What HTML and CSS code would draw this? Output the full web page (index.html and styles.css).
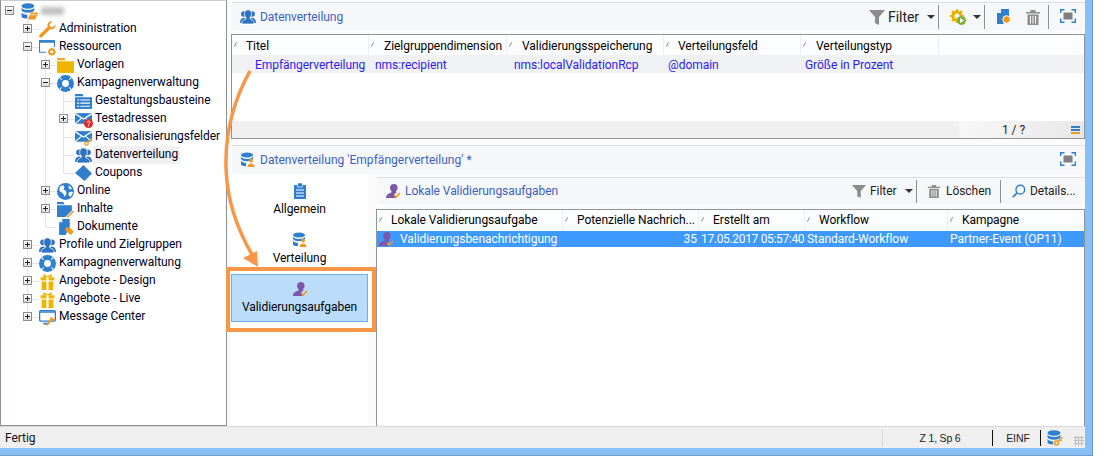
FILE: index.html
```html
<!DOCTYPE html>
<html lang="de">
<head>
<meta charset="utf-8">
<title>Datenverteilung</title>
<link rel="stylesheet" href="styles.css">
</head>
<body>
<svg class="defs" width="0" height="0" aria-hidden="true">
  <defs>
    <symbol id="i-root" viewBox="0 0 16 16"><ellipse cx="6.500" cy="2.800" rx="6" ry="2.600" fill="#2f7fcf"/><path d="M.5 4.500c1 1.500 3.400 2.100 6 2.100s5-.6 6-2.100V7c-1 1.500-3.400 2.100-6 2.100S1.500 8.500.5 7z" fill="#2f7fcf"/><path d="M.5 9c1 1.500 3.400 2.100 5.500 2.100v3.500c-3 0-5.500-.8-5.500-2.200z" fill="#2f7fcf"/><path d="M9 9h7l-2.500 6.500H6.500z" fill="#ee9a22"/><path d="M9 11h5" stroke="#fff" stroke-width=".8"/></symbol>
    <symbol id="i-wrench" viewBox="0 0 16 16"><path d="M15.500 3.200l-2.700 2.600-2.300-.5-.5-2.300L12.700.3C10.700-.2 8.300 1 8 3.500c-.1.800 0 1.400.2 2L.8 12.800c-.9 1-.8 1.900-.2 2.500.7.600 1.600.6 2.400-.2l7.400-7.400c.7.200 1.400.3 2.100.1 2.300-.5 3.400-2.600 3-4.600z" fill="#ee9a22"/></symbol>
    <symbol id="i-window" viewBox="0 0 16 16"><path d="M14.500 1.500v6" fill="none" stroke="#2f7fcf"/><path d="M.5 1.500v11h6" fill="none" stroke="#2f7fcf"/><rect y="1" width="15" height="2.500" fill="#2f7fcf"/><circle cx="12" cy="12" r="2.400" fill="none" stroke="#ee9a22" stroke-width="1.800"/><path d="M12 8.500v1M12 14.500v1M8.500 12h1M14.500 12h1M9.500 9.500l.7.7M13.800 13.800l.7.7M9.500 14.500l.7-.7M13.800 10.200l.7-.7" stroke="#ee9a22" stroke-width="1.300"/></symbol>
    <symbol id="i-folder" viewBox="0 0 16 16"><path d="M0 1h7l1 2H0z" fill="#eea91a"/><rect y="4" width="16" height="11" fill="#eeb500"/></symbol>
    <symbol id="i-ring" viewBox="0 0 16 16"><circle cx="8" cy="8" r="5.600" fill="none" stroke="#2f7fcf" stroke-width="4.800"/><path d="M8 0v3M8 13v3M0 8h3M13 8h3" stroke="#fff" stroke-width="1" transform="rotate(45 8 8)"/></symbol>
    <symbol id="i-list" viewBox="0 0 16 16"><path d="M0 1h7l1 2H0z" fill="#2f7fcf"/><rect y="4" width="16" height="11" fill="#2f7fcf"/><path d="M2 6.500h2M5 6.500h9M2 9.500h2M5 9.500h9M2 12.500h2M5 12.500h9" stroke="#fff"/></symbol>
    <symbol id="i-mail" viewBox="0 0 16 16"><rect y="2" width="16" height="10" fill="#2f7fcf"/><path d="M0 2.500l8 5 8-5" fill="none" stroke="#fff" stroke-width="1.300"/><path d="M0 12l6-5M16 12l-6-5" stroke="#fff"/></symbol>
    <symbol id="i-people" viewBox="0 0 16 16"><circle cx="3.800" cy="5" r="2.700" fill="#2f73c0"/><path d="M0 14c0-3 1.200-5 3.800-5s3.800 2 3.800 5z" fill="#2f73c0"/><circle cx="12.200" cy="5" r="2.700" fill="#2f73c0"/><path d="M8.400 14c0-3 1.200-5 3.800-5s3.800 2 3.800 5z" fill="#2f73c0"/><path d="M8 .8c2.300 0 3.600 1.700 3.600 4 0 1.700-.7 3-1.600 3.700v1.300l3 1.700c.8.500 1 1.600 1 3.500H2c0-1.900.2-3 1-3.500l3-1.700V8.500C5.100 7.800 4.400 6.500 4.400 4.800c0-2.300 1.300-4 3.600-4z" fill="#2f73c0" stroke="#fff" stroke-width=".7"/></symbol>
    <symbol id="i-diamond" viewBox="0 0 16 16"><path d="M8 0l8 8-7 7-9-7.500z" fill="#2f7fcf"/></symbol>
    <symbol id="i-globe" viewBox="0 0 16 16"><circle cx="8" cy="8" r="8" fill="#2f7fcf"/><path d="M3 3l3-1 1 2-1 2 2 1 1 3-2 3-1-3-3-2-1-2zM11 2l3 3-1 1-2-1zM11 9l3-1 1 1-2 4-2-1z" fill="#fff"/></symbol>
    <symbol id="i-fpen" viewBox="0 0 16 16"><path d="M0 1h6l1 2H0z" fill="#2f7fcf"/><path d="M0 4h14v5l-6 6H0z" fill="#2f7fcf"/><path d="M9 15l6-6 1 1-6 6z" fill="#ee9a22"/></symbol>
    <symbol id="i-doc" viewBox="0 0 16 16"><path d="M5 0h7v8l-4 7H2V3z" fill="#2f7fcf"/><path d="M5 0v3H2z" fill="#fff"/><path d="M8 8h4l4 4-3 3-5-4z" fill="#ee9a22"/></symbol>
    <symbol id="i-gift" viewBox="0 0 16 16"><path d="M4 1l4 2 4-2v3H4z" fill="#eeb500"/><rect x="1.500" y="4" width="13" height="3" fill="#eeb500"/><path d="M2.500 8h11v8h-11z" fill="#eeb500"/><path d="M7 4h2v12H7z" fill="#fff"/></symbol>
    <symbol id="i-monitor" viewBox="0 0 16 16"><rect x=".6" y="1.600" width="14.800" height="9.800" rx="1" fill="#fff" stroke="#2f7fcf" stroke-width="1.200"/><path d="M1 2h14v1.500H1zM4 13h5v1.500H4z" fill="#2f7fcf"/><path d="M15 8l-1.500 1.500-1-.5.300-1.300C11 7.300 9.800 8.800 10.400 10.300L7 14c-.8 1 .4 2 1.200 1.200l3.600-3.600c1.800.4 3.300-1.200 3.200-3.600z" fill="#ee9a22"/></symbol>
    <symbol id="i-funnel" viewBox="0 0 16 16"><path d="M0 1h16l-6 7v8l-4-2V8z" fill="#8c8c8c"/></symbol>
    <symbol id="i-gearplay" viewBox="0 0 16 16"><circle cx="7" cy="7" r="4" fill="none" stroke="#e5b000" stroke-width="3"/><path d="M7 0v3M7 11v3M0 7h3M11 7h3M2 2l2 2M10 10l2 2M2 12l2-2M10 4l2-2" stroke="#e5b000" stroke-width="2"/><circle cx="11.500" cy="11.500" r="4.500" fill="#7db33a"/><path d="M10 9l4 2.500-4 2.500z" fill="#fff"/></symbol>
    <symbol id="i-docgear" viewBox="0 0 16 16"><path d="M5 0h8v7l-6 8H1V4z" fill="#2f7fcf"/><path d="M5 0v4H1z" fill="#fff"/><circle cx="10.500" cy="10.500" r="3.800" fill="#ee9a22" stroke="#fff"/></symbol>
    <symbol id="i-trash" viewBox="0 0 16 16"><path d="M1 3h14v1.500H1zM5.500 1h5v2h-5z" fill="#8c8c8c"/><path d="M2.500 5.500h11V16h-11z" fill="#8c8c8c"/><path d="M5.500 7v7.500M8 7v7.500M10.500 7v7.500" stroke="#fff"/></symbol>
    <symbol id="i-expand" viewBox="0 0 16 16"><path d="M.7 4V.7H4.500M11.500.7h3.800V4M.7 9.500v3.800H4.500M11.500 13.300h3.800V9.500" fill="none" stroke="#2f7fcf" stroke-width="1.400"/><rect x="3.500" y="3.500" width="9" height="7" fill="#808080"/></symbol>
    <symbol id="i-dbperson" viewBox="0 0 16 16"><ellipse cx="7" cy="3" rx="6" ry="2.600" fill="#2f7fcf"/><path d="M1 4.800c1 1.600 3.400 2.200 6 2.200s5-.6 6-2.200V7c-1 1.600-3.400 2.200-6 2.200S2 8.600 1 7z" fill="#2f7fcf"/><path d="M1 8.800c1 1.400 3 2 5 2v3.500c-3 0-5-.7-5-2z" fill="#2f7fcf"/><circle cx="11" cy="8.500" r="2" fill="#ee9a22"/><path d="M7.500 15c0-2 1.500-3.500 3.500-3.500s3.500 1.500 3.500 3.500z" fill="#ee9a22"/></symbol>
    <symbol id="i-clip" viewBox="0 0 16 16"><rect x="2" y="2" width="12" height="14" fill="#2f7fcf"/><rect x="5.500" y="0" width="5" height="4" fill="#2f7fcf" stroke="#fff" stroke-width=".6"/><path d="M4 7h8M4 10h8M4 13h8" stroke="#fff"/></symbol>
    <symbol id="i-valid" viewBox="0 0 16 16"><path d="M8 0c2.200 0 3.600 1.600 3.600 3.700 0 1.400-.6 2.500-1.500 3.200v1.600l1 .6H9.500l-1.300 1.400L10 14H0c0-2.500 1-3.600 3-4.500L5.400 8.500V6.900C4.500 6.200 4 5.100 4 3.700 4 1.600 5.800 0 8 0z" fill="#7b57a8" transform="translate(1 1)"/><path d="M9 12l2 2 4-4" fill="none" stroke="#ee9a22" stroke-width="1.600"/></symbol>
    <symbol id="i-search" viewBox="0 0 16 16"><circle cx="9.500" cy="6.500" r="5" fill="none" stroke="#2f7fcf" stroke-width="1.600"/><path d="M5.800 10.200L1 15" stroke="#2f7fcf" stroke-width="2"/></symbol>
    <symbol id="i-dbkey" viewBox="0 0 16 16"><ellipse cx="7" cy="3" rx="6.500" ry="2.800" fill="#2f7fcf"/><path d="M.5 4.800c1 1.600 3.900 2.200 6.500 2.200s5.500-.6 6.500-2.200v2.700c-1 1.600-3.900 2.200-6.500 2.200S1.500 9.100.5 7.500z" fill="#2f7fcf"/><path d="M.5 9.300c1 1.500 3.500 2 5.500 2.100v3.100c-3 0-5.500-.8-5.500-2.200z" fill="#2f7fcf"/><circle cx="9.500" cy="13" r="2" fill="none" stroke="#ee9a22" stroke-width="1.500"/><path d="M11 11.500L15.500 7M13 9.500l1.500 1.500" stroke="#ee9a22" stroke-width="1.500"/></symbol>
    <symbol id="i-q" viewBox="0 0 9 9"><circle cx="4.500" cy="4.500" r="4.500" fill="#e02b27"/><path d="M3 3.300c.2-1.600 3-1.600 3 0 0 1.200-1.500 1-1.500 2.300M4.500 6.500v1" fill="none" stroke="#fff"/></symbol>
    <symbol id="i-key" viewBox="0 0 9 9"><circle cx="2.500" cy="6.500" r="1.700" fill="none" stroke="#ee9a22" stroke-width="1.200"/><path d="M3.700 5.300L8.500.5M6.500 2.500L8 4" stroke="#ee9a22" stroke-width="1.200"/></symbol>
  </defs>
</svg>

<div class="app">
  <div class="main">
    <nav class="tree">
      <div class="node root"><span class="c"><i class="tw minus"></i></span><svg class="ico"><use href="#i-root"/></svg><span class="blurred"></span></div>
      <div class="node"><span class="c t"><i class="tw plus"></i></span><svg class="ico"><use href="#i-wrench"/></svg><span class="lbl">Administration</span></div>
      <div class="node"><span class="c t"><i class="tw minus"></i></span><svg class="ico"><use href="#i-window"/></svg><span class="lbl">Ressourcen</span></div>
      <div class="node"><span class="c v"></span><span class="c t"><i class="tw plus"></i></span><svg class="ico"><use href="#i-folder"/></svg><span class="lbl">Vorlagen</span></div>
      <div class="node"><span class="c v"></span><span class="c t"><i class="tw minus"></i></span><svg class="ico"><use href="#i-ring"/></svg><span class="lbl">Kampagnenverwaltung</span></div>
      <div class="node"><span class="c v"></span><span class="c v"></span><span class="c t"></span><svg class="ico"><use href="#i-list"/></svg><span class="lbl">Gestaltungsbausteine</span></div>
      <div class="node"><span class="c v"></span><span class="c v"></span><span class="c t"><i class="tw plus"></i></span><span class="ico-wrap"><svg class="ico"><use href="#i-mail"/></svg><svg class="badge"><use href="#i-q"/></svg></span><span class="lbl">Testadressen</span></div>
      <div class="node"><span class="c v"></span><span class="c v"></span><span class="c t"></span><span class="ico-wrap"><svg class="ico"><use href="#i-mail"/></svg><svg class="badge"><use href="#i-key"/></svg></span><span class="lbl">Personalisierungsfelder</span></div>
      <div class="node"><span class="c v"></span><span class="c v"></span><span class="c t"></span><svg class="ico"><use href="#i-people"/></svg><span class="lbl current">Datenverteilung</span></div>
      <div class="node"><span class="c v"></span><span class="c v"></span><span class="c l"></span><svg class="ico"><use href="#i-diamond"/></svg><span class="lbl">Coupons</span></div>
      <div class="node"><span class="c v"></span><span class="c t"><i class="tw plus"></i></span><svg class="ico"><use href="#i-globe"/></svg><span class="lbl">Online</span></div>
      <div class="node"><span class="c v"></span><span class="c t"><i class="tw plus"></i></span><svg class="ico"><use href="#i-fpen"/></svg><span class="lbl">Inhalte</span></div>
      <div class="node"><span class="c v"></span><span class="c l"></span><svg class="ico"><use href="#i-doc"/></svg><span class="lbl">Dokumente</span></div>
      <div class="node"><span class="c t"><i class="tw plus"></i></span><svg class="ico"><use href="#i-people"/></svg><span class="lbl">Profile und Zielgruppen</span></div>
      <div class="node"><span class="c t"><i class="tw plus"></i></span><svg class="ico"><use href="#i-ring"/></svg><span class="lbl">Kampagnenverwaltung</span></div>
      <div class="node"><span class="c t"><i class="tw plus"></i></span><svg class="ico"><use href="#i-gift"/></svg><span class="lbl">Angebote - Design</span></div>
      <div class="node"><span class="c t"><i class="tw plus"></i></span><svg class="ico"><use href="#i-gift"/></svg><span class="lbl">Angebote - Live</span></div>
      <div class="node"><span class="c l"><i class="tw plus"></i></span><svg class="ico"><use href="#i-monitor"/></svg><span class="lbl">Message Center</span></div>
    </nav>

    <section class="content">
      <header class="bar bar-top">
        <svg class="ico"><use href="#i-people"/></svg>
        <span class="bar-title">Datenverteilung</span>
        <span class="tools">
          <svg class="ico"><use href="#i-funnel"/></svg>
          <span class="tool-lg">Filter</span>
          <i class="caret caret-filter"></i>
          <i class="sep"></i>
          <svg class="ico ico-gear"><use href="#i-gearplay"/></svg>
          <i class="caret caret-gear"></i>
          <i class="sep"></i>
          <svg class="ico ico-doc"><use href="#i-docgear"/></svg>
          <svg class="ico ico-trash"><use href="#i-trash"/></svg>
          <i class="sep sep-trash"></i>
          <svg class="ico ico-exp"><use href="#i-expand"/></svg>
        </span>
      </header>

      <div class="grid grid-top">
        <div class="row head cols-top">
          <div class="hc"><i class="sort"></i>Titel</div>
          <div class="hc"><i class="sort"></i>Zielgruppendimension</div>
          <div class="hc"><i class="sort"></i>Validierungsspeicherung</div>
          <div class="hc"><i class="sort"></i>Verteilungsfeld</div>
          <div class="hc"><i class="sort"></i>Verteilungstyp</div>
          <div class="hc"></div>
        </div>
        <div class="row data cols-top">
          <div class="dc">Empfängerverteilung</div>
          <div class="dc">nms:recipient</div>
          <div class="dc">nms:localValidationRcp</div>
          <div class="dc">@domain</div>
          <div class="dc">Größe in Prozent</div>
          <div class="dc"></div>
        </div>
        <div class="grid-foot">
          <span class="pager">1 / ?</span>
          <i class="menu-lines"></i>
        </div>
      </div>

      <header class="bar bar-detail">
        <svg class="ico"><use href="#i-dbperson"/></svg>
        <span class="bar-title title-wide">Datenverteilung 'Empfängerverteilung' *</span>
        <span class="tools">
          <svg class="ico ico-exp"><use href="#i-expand"/></svg>
        </span>
      </header>

      <div class="detail">
        <div class="sidenav">
          <div class="navitem"><svg class="ico"><use href="#i-clip"/></svg><span>Allgemein</span></div>
          <div class="navitem"><svg class="ico"><use href="#i-dbperson"/></svg><span>Verteilung</span></div>
          <div class="navitem active"><svg class="ico"><use href="#i-valid"/></svg><span>Validierungsaufgaben</span></div>
        </div>
        <div class="pane">
          <header class="bar bar-sub">
            <svg class="ico"><use href="#i-valid"/></svg>
            <span class="bar-title">Lokale Validierungsaufgaben</span>
            <span class="tools tools-sub">
              <svg class="ico ico-sm"><use href="#i-funnel"/></svg>
              <span class="tool-txt txt-filter">Filter</span>
              <i class="caret caret-sub"></i>
              <i class="sep"></i>
              <svg class="ico ico-sm ico-del"><use href="#i-trash"/></svg>
              <span class="tool-txt txt-del">Löschen</span>
              <i class="sep sep-del"></i>
              <svg class="ico ico-sm ico-find"><use href="#i-search"/></svg>
              <span class="tool-txt txt-details">Details...</span>
            </span>
          </header>
          <div class="grid grid-sub">
            <div class="row head head-sub cols-sub">
              <div class="hc"><i class="sort"></i>Lokale Validierungsaufgabe</div>
              <div class="hc"><i class="sort"></i>Potenzielle Nachrich...</div>
              <div class="hc"><i class="sort"></i>Erstellt am</div>
              <div class="hc"><i class="sort"></i>Workflow</div>
              <div class="hc"><i class="sort"></i>Kampagne</div>
            </div>
            <div class="row data selected cols-sub">
              <div class="dc dc-icon"><svg class="ico"><use href="#i-valid"/></svg>Validierungsbenachrichtigung</div>
              <div class="dc dc-num">35</div>
              <div class="dc dc-date">17.05.2017 05:57:40</div>
              <div class="dc dc-tight">Standard-Workflow</div>
              <div class="dc dc-tight">Partner-Event (OP11)</div>
            </div>
          </div>
        </div>
      </div>
    </section>
  </div>

  <footer class="status">
    <span class="st-msg">Fertig</span>
    <span class="st-pos">Z 1, Sp 6</span>
    <span class="st-ins">EINF</span>
    <span class="st-db"><svg class="ico"><use href="#i-dbkey"/></svg></span>
    <i class="grip"></i>
  </footer>

  <svg class="arrow" width="300" height="290" viewBox="0 0 300 290" aria-hidden="true">
    <path d="M250 71C236 96 225 130 226 168C227 205 242 238 254 258" fill="none" stroke="#f79646" stroke-width="3.500"/>
    <path d="M243 258L257 251L258 267z" fill="#f79646"/>
  </svg>
  <div class="callout"></div>
</div>
</body>
</html>
```

FILE: styles.css
```css
* { box-sizing: border-box; }
html, body { margin: 0; padding: 0; background: #fff; }
body { font: 12px/16px Roboto, "Liberation Sans", sans-serif; letter-spacing: -.05px; color: #111; }
.defs { position: absolute; }
i { display: block; font-style: normal; }

.app {
  position: relative;
  width: 1093px;
  height: 456px;
  display: flex;
  flex-direction: column;
  background: #86bef5;
  border-right: 1px solid #6f9cc6;
  border-bottom: 1px solid #6f9cc6;
  padding: 0 7px 6px 0;
}
.main { display: flex; height: 426px; flex: none; background: #fbfbfb; }

/* tree */
.tree {
  width: 227px;
  flex: none;
  padding-top: 1px;
  background: #fff;
  border: 1px solid #8a8f96;
  border-top-color: #c9cdd1;
}
.node { display: flex; align-items: center; height: 18px; position: relative; padding-left: 18px; }
.node.root { padding-left: 0; }
.c { width: 18px; height: 18px; flex: none; position: relative; }
.c.v::before, .c.t::before, .c.l::before {
  content: ""; position: absolute; left: 8px; top: 0; width: 1px; height: 18px; background: #e4e4e4;
}
.c.l::before { height: 9px; }
.c.t::after, .c.l::after {
  content: ""; position: absolute; left: 9px; top: 9px; width: 11px; height: 1px; background: #e4e4e4;
}
.tw {
  position: absolute; left: 4px; top: 4px; width: 9px; height: 9px; z-index: 1;
  border: 1px solid #8e8e8e;
  background: linear-gradient(#fff, #dcdcdc);
}
.tw::before { content: ""; position: absolute; left: 1px; top: 3px; width: 5px; height: 1px; background: #222; }
.tw.plus::after { content: ""; position: absolute; left: 3px; top: 1px; width: 1px; height: 5px; background: #222; }
.ico { width: 16px; height: 16px; flex: none; display: block; }
.node > .ico, .ico-wrap { width: 17px; height: 17px; margin: 0 3px 0 2px; position: relative; z-index: 1; }
.ico-wrap { flex: none; }
.ico-wrap .ico { width: 17px; height: 17px; }
.badge { position: absolute; right: -1px; bottom: 0; width: 9px; height: 9px; }
.lbl { color: #00001e; white-space: nowrap; padding: 0 2px 2px 0; line-height: 16px; }
.lbl.current { background: #f0f0f0; margin-left: -2px; padding-left: 2px; }
.blurred { width: 23px; height: 8px; background: #bfbfbf; filter: blur(2px); }

/* content area */
.content { flex: 1; min-width: 0; display: flex; flex-direction: column; }
.bar {
  display: flex; align-items: center; flex: none;
  background: #f6f7f8;
  border-top: 1px solid #ddd;
}
.bar-title { color: #3a62bf; white-space: nowrap; }
.title-wide { letter-spacing: .03px; }
.bar > .ico { margin-right: 4px; }
.bar-top { margin: 2px 0 3px 5px; height: 29px; padding-left: 8px; }
.bar-detail { margin: 6px 0 0 5px; height: 29px; padding-left: 8px; }
.tools { margin-left: auto; display: flex; align-items: center; height: 100%; padding-right: 9px; }
.tool-lg { font-size: 14px; margin-left: 3px; width: 30px; color: #222; }
.caret { width: 0; height: 0; border: 4px solid transparent; border-top: 4px solid #333; border-bottom: 0; }
.caret-filter { margin: 0 3px 0 9px; }
.caret-gear { margin: 0 3px 0 7px; }
.sep { width: 1px; height: 24px; background: #8e8e8e; }
.ico-gear { margin-left: 11px; }
.ico-doc { margin-left: 11px; }
.ico-trash { margin-left: 13px; }
.sep-trash { margin-left: 7px; }
.ico-exp { margin-left: 11px; }

.grid { background: #fff; border: 1px solid #8f9499; display: flex; flex-direction: column; }
.grid-top { height: 105px; margin-left: 4px; }
.row { display: grid; flex: none; }
.cols-top { grid-template-columns: 137px 138px 157px 137px 138px 1fr; }
.cols-sub { grid-template-columns: 186px 136px 106px 143px 1fr; }
.head { height: 20px; background: #fcfdfe; }
.hc {
  position: relative; padding-left: 14px; line-height: 20px; color: #000; white-space: nowrap;
  border-right: 1px solid #e8eef4;
}
.hc:last-child { border-right: 0; }
.sort { position: absolute; left: 3px; top: 7px; width: 1px; height: 5px; background: #9a9a9a; transform: rotate(30deg); }
.data { height: 18px; background: #f0f1f2; }
.dc { padding-left: 5px; color: #2d1bf5; line-height: 18px; white-space: nowrap; }
.cols-top .hc { padding-top: 1px; }
.cols-top .hc:nth-child(2), .cols-top .hc:nth-child(3), .cols-top .hc:nth-child(5) { padding-left: 15px; }
.cols-top .dc { padding-top: 1px; }
.cols-top .dc:nth-child(1) { padding-left: 23px; }
.cols-top .dc:nth-child(2) { padding-left: 6px; }
.cols-top .dc:nth-child(3) { padding-left: 7px; }
.cols-top .dc:nth-child(4), .cols-top .dc:nth-child(5) { padding-left: 4px; }
.grid-foot {
  margin-top: auto; height: 17px; display: flex; align-items: center; flex: none;
  background: linear-gradient(90deg, #f0f0f0 727px, #f7f7f7 728px, #e8e8e8);
}
.pager { margin-left: 770px; width: 21px; flex: none; color: #222; white-space: nowrap; }
.menu-lines {
  margin-left: 48px; width: 9px; height: 8px; flex: none;
  background: linear-gradient(#2f7fcf 0 2px, transparent 2px 3px, #2f7fcf 3px 5px, transparent 5px 6px, #ee9a22 6px);
}

/* detail */
.detail { flex: 1; min-height: 0; display: flex; }
.sidenav { width: 137px; margin-left: 4px; padding-top: 2px; background: #fff; flex: none; display: flex; flex-direction: column; gap: 1px; }
.navitem { height: 48px; display: flex; flex-direction: column; align-items: center; padding-top: 6px; border: 1px solid transparent; }
.navitem span { margin-top: 2px; color: #000; }
.navitem.active { background: #bbdcfb; border-color: #6fb0ec; }
.pane { flex: 1; min-width: 0; margin-left: 8px; display: flex; flex-direction: column; }
.bar-sub { margin: 3px 0 5px 1px; height: 27px; padding-left: 8px; }
.tools-sub { padding-right: 10px; }
.tools-sub .sep { height: 23px; }
.tool-txt { color: #222; flex: none; white-space: nowrap; }
.txt-filter { width: 27px; margin-left: 4px; }
.txt-del { width: 44px; margin-left: 5px; }
.txt-details { width: 45px; margin-left: 4px; }
.ico-sm { width: 14px; height: 14px; }
.caret-sub { margin: 0 3px 0 8px; }
.ico-del { margin-left: 10px; }
.sep-del { margin-left: 10px; }
.ico-find { margin-left: 11px; }
.grid-sub { flex: 1; min-height: 0; border-bottom: 0; }
.head-sub { height: 21px; }
.selected { height: 16px; background: #3d99fc; }
.selected .dc { color: #fff; line-height: 16px; }
.dc-icon { display: flex; align-items: center; padding-left: 1px; }
.dc-icon .ico { margin-right: 6px; }
.selected .dc-num { text-align: right; padding: 0 2px 0 0; }
.selected .dc-date { padding-left: 2px; letter-spacing: -.33px; }
.selected .dc-tight { padding-left: 2px; }

/* status */
.status {
  height: 22px; flex: none; display: flex; align-items: center; position: relative;
  background: #efefef; border-top: 1px solid #d9d9d9; padding-left: 5px;
}
.st-pos {
  margin-left: auto; width: 110px; height: 16px; text-align: center; padding-left: 5px; letter-spacing: -.2px;
  font: 10.500px/16px "Liberation Sans", sans-serif; border-left: 1px solid #d6d6d6; color: #222;
}
.st-ins {
  width: 49px; height: 16px; text-align: center; padding-left: 3px; font: 10.500px/16px "Liberation Sans", sans-serif;
  border-left: 1px solid #111; border-right: 1px solid #111; color: #222;
}
.st-db { display: block; width: 33px; height: 16px; padding-left: 6px; }
.grip {
  width: 10px; height: 10px; margin: 6px 1px 0 0;
  background: radial-gradient(circle, #bdbdbd 1px, transparent 1.2px) 0 0 / 3px 3px;
}

/* overlays */
.arrow { position: absolute; left: 0; top: 0; pointer-events: none; z-index: 2; }
.callout { position: absolute; left: 226px; top: 267px; width: 150px; height: 65px; border: 4px solid #f79646; pointer-events: none; z-index: 2; }
```
